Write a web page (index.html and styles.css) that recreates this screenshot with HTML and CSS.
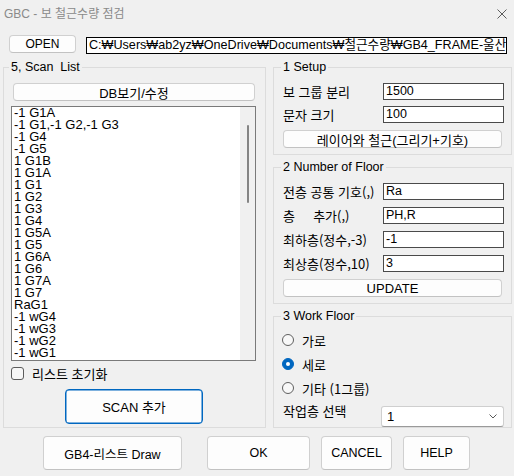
FILE: index.html
```html
<!DOCTYPE html>
<html lang="ko">
<head>
<meta charset="utf-8">
<title>GBC - 보 철근수량 점검</title>
<link rel="stylesheet" href="styles.css">
</head>
<body>
<div class="window">
  <div class="titlebar">
    <span class="title">GBC - 보 철근수량 점검</span>
    <svg class="close" viewBox="0 0 10 10" width="10" height="10"><path d="M0.5 0.5 L9.5 9.5 M9.5 0.5 L0.5 9.5" stroke="#5c5c5c" stroke-width="1" fill="none"/></svg>
  </div>

  <div class="pathrow">
    <button class="btn btn-open">OPEN</button>
    <div class="path">C:₩Users₩ab2yz₩OneDrive₩Documents₩철근수량₩GB4_FRAME-울산3공장.xlsx</div>
  </div>

  <div class="main">
    <fieldset class="group group-scan">
      <legend>5, Scan&nbsp; List</legend>
      <button class="btn btn-db">DB보기/수정</button>
      <div class="listbox">
        <ul class="items">
          <li>-1 G1A</li>
          <li>-1 G1,-1 G2,-1 G3</li>
          <li>-1 G4</li>
          <li>-1 G5</li>
          <li>1 G1B</li>
          <li>1 G1A</li>
          <li>1 G1</li>
          <li>1 G2</li>
          <li>1 G3</li>
          <li>1 G4</li>
          <li>1 G5A</li>
          <li>1 G5</li>
          <li>1 G6A</li>
          <li>1 G6</li>
          <li>1 G7A</li>
          <li>1 G7</li>
          <li>RaG1</li>
          <li>-1 wG4</li>
          <li>-1 wG3</li>
          <li>-1 wG2</li>
          <li>-1 wG1</li>
        </ul>
        <div class="scrolltrack"><div class="thumb"></div></div>
      </div>
      <label class="check">
        <span class="checkbox"></span>
        <span class="ko">리스트 초기화</span>
      </label>
      <button class="btn btn-scan">SCAN 추가</button>
    </fieldset>

    <div class="rightcol">
      <fieldset class="group group-right group-setup">
        <legend>1 Setup</legend>
        <div class="row">
          <span class="lbl ko">보 그룹 분리</span>
          <div class="edit">1500</div>
        </div>
        <div class="row row-next">
          <span class="lbl ko">문자 크기</span>
          <div class="edit">100</div>
        </div>
        <button class="btn btn-wide">레이어와 철근(그리기+기호)</button>
      </fieldset>

      <fieldset class="group group-right group-floor">
        <legend>2 Number of Floor</legend>
        <div class="row">
          <span class="lbl ko">전층 공통 기호(,)</span>
          <div class="edit">Ra</div>
        </div>
        <div class="row row-next">
          <span class="lbl ko">층&nbsp;&nbsp;&nbsp;&nbsp; 추가(,)</span>
          <div class="edit">PH,R</div>
        </div>
        <div class="row row-next">
          <span class="lbl ko">최하층(정수,-3)</span>
          <div class="edit">-1</div>
        </div>
        <div class="row row-next">
          <span class="lbl ko">최상층(정수,10)</span>
          <div class="edit">3</div>
        </div>
        <button class="btn btn-wide">UPDATE</button>
      </fieldset>

      <fieldset class="group group-right group-work">
        <legend>3 Work Floor</legend>
        <label class="radio-row">
          <span class="radio"></span>
          <span class="ko">가로</span>
        </label>
        <label class="radio-row">
          <span class="radio radio-on"></span>
          <span class="ko">세로</span>
        </label>
        <label class="radio-row">
          <span class="radio"></span>
          <span class="ko">기타 (1그룹)</span>
        </label>
        <div class="combo-row">
          <span class="combo-lbl ko">작업층 선택</span>
          <div class="combo">
            <span class="combo-val">1</span>
            <svg class="chev" viewBox="0 0 8 5" width="8" height="5"><path d="M0.5 0.5 L4 4 L7.5 0.5" stroke="#5a5a5a" stroke-width="1" fill="none"/></svg>
          </div>
        </div>
      </fieldset>
    </div>
  </div>

  <div class="footer">
    <button class="btn btn-lg btn-draw">GB4-리스트 Draw</button>
    <button class="btn btn-lg btn-ok">OK</button>
    <button class="btn btn-lg btn-cancel">CANCEL</button>
    <button class="btn btn-lg btn-help">HELP</button>
  </div>
</div>
</body>
</html>
```

FILE: styles.css
```css
html, body {
  margin: 0;
  padding: 0;
}

body {
  background: #f0f0f0;
  font-family: "Liberation Sans", "Noto Sans CJK KR", sans-serif;
  font-size: 12px;
  color: #000;
}

.window {
  width: 514px;
  height: 476px;
  overflow: hidden;
  background: #f0f0f0;
}

.ko {
  font-family: "Noto Sans CJK KR", "Liberation Sans", sans-serif;
  font-size: 13px;
}

/* title bar */
.titlebar {
  height: 28px;
  box-sizing: border-box;
  display: flex;
  align-items: center;
  justify-content: space-between;
  padding: 0 7px 0 4px;
}

.title {
  color: #8a8a8a;
  font-family: "Liberation Sans", "Noto Sans CJK KR", sans-serif;
  font-size: 12px;
  line-height: 14px;
}

.close {
  display: block;
}

/* buttons */
.btn {
  box-sizing: border-box;
  margin: 0;
  padding: 0;
  background: #fdfdfd;
  border: 1px solid #d0d0d0;
  border-bottom-color: #c2c2c2;
  border-radius: 4px;
  font-family: "Liberation Sans", "Noto Sans CJK KR", sans-serif;
  font-size: 12px;
  color: #000;
  display: flex;
  align-items: center;
  justify-content: center;
  white-space: nowrap;
}

/* path row */
.pathrow {
  display: flex;
  align-items: flex-start;
  margin-top: 7px;
  padding-left: 9px;
}

.btn-open {
  width: 67px;
  height: 18px;
}

.path {
  box-sizing: border-box;
  margin-left: 10px;
  margin-top: 2px;
  width: 421px;
  height: 17px;
  border: 1px solid #000;
  background: #fff;
  padding-left: 2px;
  font-size: 12.6px;
  line-height: 15px;
  white-space: nowrap;
  overflow: hidden;
}

/* main area */
.main {
  display: flex;
  align-items: flex-start;
  margin-top: 6px;
  padding-left: 3px;
}

.group {
  box-sizing: border-box;
  margin: 0;
  min-width: 0;
  border: 1px solid #dcdcdc;
}

.group legend {
  padding: 0 2px;
  margin-left: -2px;
  font-family: "Liberation Sans", "Noto Sans CJK KR", sans-serif;
  font-size: 12.5px;
  line-height: 14px;
  color: #000;
}

.group-scan {
  width: 263px;
  padding: 9px 9px 3px 7px;
}

.btn-db {
  margin-left: 2px;
  width: 242px;
  height: 18px;
  font-size: 13px;
}

.listbox {
  display: flex;
  box-sizing: border-box;
  width: 245px;
  height: 255px;
  margin-top: 5px;
  border: 1px solid #7a7a7a;
  background: #fff;
}

.items {
  flex: 1;
  list-style: none;
  margin: 0;
  padding: 0 0 0 2px;
  overflow: hidden;
  font-family: "Liberation Sans", sans-serif;
  font-size: 13px;
  line-height: 12px;
}

.items li {
  height: 12px;
  white-space: nowrap;
}

.scrolltrack {
  box-sizing: border-box;
  width: 15px;
  background: #f0f0f0;
  padding: 18px 0 0 7px;
}

.thumb {
  width: 2px;
  height: 78px;
  background: #858585;
  border-radius: 1px;
}

.check {
  display: flex;
  align-items: center;
  height: 13px;
  margin-top: 6px;
}

.checkbox {
  box-sizing: border-box;
  width: 13px;
  height: 13px;
  border: 1px solid #5c5c5c;
  border-radius: 3px;
  background: #f7f7f7;
  margin-right: 8px;
}

.btn-scan {
  margin-top: 9px;
  margin-left: 54px;
  width: 138px;
  height: 35px;
  border: 1px solid #0067c0;
  box-shadow: inset 0 0 0 0.5px #0067c0;
  font-size: 13px;
}

/* right column */
.rightcol {
  display: flex;
  flex-direction: column;
  gap: 5px;
  margin-left: 7px;
}

.group-right {
  width: 239px;
  padding-left: 9px;
  padding-right: 7px;
}

.group-setup {
  padding-top: 9px;
  padding-bottom: 6px;
}

.group-floor {
  padding-top: 9px;
  padding-bottom: 6px;
}

.group-floor .row-next {
  margin-top: 7px;
}

.row {
  display: flex;
  align-items: center;
  height: 17px;
}

.row-next {
  margin-top: 6px;
}

.lbl {
  width: 100px;
  white-space: pre;
  line-height: 17px;
}

.edit {
  box-sizing: border-box;
  width: 121px;
  height: 17px;
  border: 1px solid #4a4a4a;
  background: #fff;
  padding-left: 2px;
  font-family: "Liberation Sans", sans-serif;
  font-size: 12.5px;
  line-height: 15px;
  white-space: nowrap;
}

.btn-wide {
  margin-top: 7px;
  width: 219px;
  height: 18px;
  font-size: 13px;
}

.group-work {
  padding-top: 5px;
  padding-bottom: 0;
}

.radio-row {
  display: flex;
  align-items: center;
  height: 24px;
}

.radio {
  box-sizing: border-box;
  width: 12px;
  height: 12px;
  margin-left: -1px;
  margin-right: 8px;
  border: 1px solid #5f5f5f;
  border-radius: 50%;
  background: #f8f8f8;
  display: flex;
  align-items: center;
  justify-content: center;
}

.radio-on {
  border-color: #0067c0;
  background: #0067c0;
}

.radio-on::after {
  content: "";
  width: 4px;
  height: 4px;
  border-radius: 50%;
  background: #fff;
}

.combo-row {
  display: flex;
  align-items: flex-start;
  margin-top: 6px;
}

.combo-lbl {
  width: 98px;
  margin-top: -4px;
  line-height: 17px;
}

.combo {
  box-sizing: border-box;
  width: 123px;
  height: 21px;
  display: flex;
  align-items: center;
  justify-content: space-between;
  padding: 0 6px 0 5px;
  background: #fff;
  border: 1px solid #cfcfcf;
  border-bottom-color: #9a9a9a;
  border-radius: 3px;
}

.combo-val {
  font-family: "Liberation Sans", sans-serif;
  font-size: 13px;
}

.chev {
  display: block;
}

/* footer */
.footer {
  display: flex;
  margin-top: 8px;
  padding-left: 43px;
}

.btn-lg {
  height: 34px;
  font-size: 12.5px;
}

.btn-draw {
  width: 139px;
}

.btn-ok {
  width: 103px;
  margin-left: 25px;
}

.btn-cancel {
  width: 71px;
  margin-left: 11px;
}

.btn-help {
  width: 67px;
  margin-left: 11px;
}
```
